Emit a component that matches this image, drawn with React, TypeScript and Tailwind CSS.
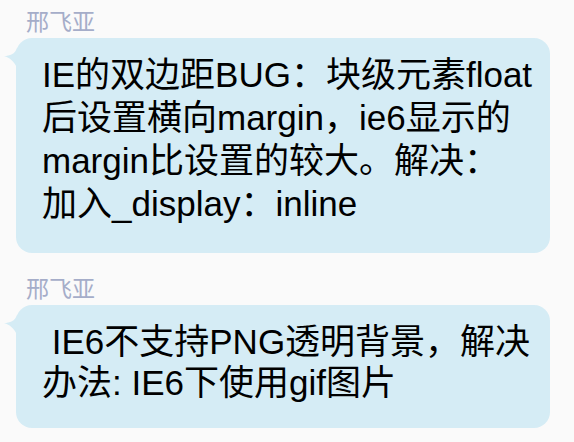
import React from 'react';

const Tail: React.FC = () => (
  <svg className="absolute left-[-13px] top-[10px]" width="16" height="20" viewBox="0 0 16 20">
    <path d="M14 0 C12 6 7 8 1 8 C7 10 11 13 14 20 L16 20 L16 0 Z" fill="#d5ecf5" />
  </svg>
);

export default function App() {
  return (
    <div
      className="h-[442px] w-[574px] overflow-hidden bg-[#fafafa] pt-[9px]"
      style={{ fontFamily: '"Liberation Sans", "Noto Sans CJK SC", sans-serif' }}
    >
      <div>
        <div className="pl-[26px] text-[23px] leading-[26px] text-[#a5adc9]">邢飞亚</div>
        <div className="relative ml-4 mr-6 mt-[3px] rounded-[16px] bg-[#d5ecf5] pb-[28px] pl-[26px] pr-2 pt-[15px]">
          <Tail />
          {['IE的双边距BUG：块级元素float', '后设置横向margin，ie6显示的', 'margin比设置的较大。解决：', '加入_display：inline'].map((l, i) => (
            <div key={i} className="whitespace-pre text-[35px] leading-[43px] text-black">{l}</div>
          ))}
        </div>
      </div>
      <div className="mt-[23px]">
        <div className="pl-[26px] text-[23px] leading-[26px] text-[#a5adc9]">邢飞亚</div>
        <div className="relative ml-4 mr-6 mt-[3px] rounded-[16px] bg-[#d5ecf5] pb-[25px] pl-[26px] pr-2 pt-[16px]">
          <Tail />
          {[' IE6不支持PNG透明背景，解决', '办法: IE6下使用gif图片'].map((l, i) => (
            <div key={i} className="whitespace-pre text-[35px] leading-[41px] text-black">{l}</div>
          ))}
        </div>
      </div>
    </div>
  );
}
